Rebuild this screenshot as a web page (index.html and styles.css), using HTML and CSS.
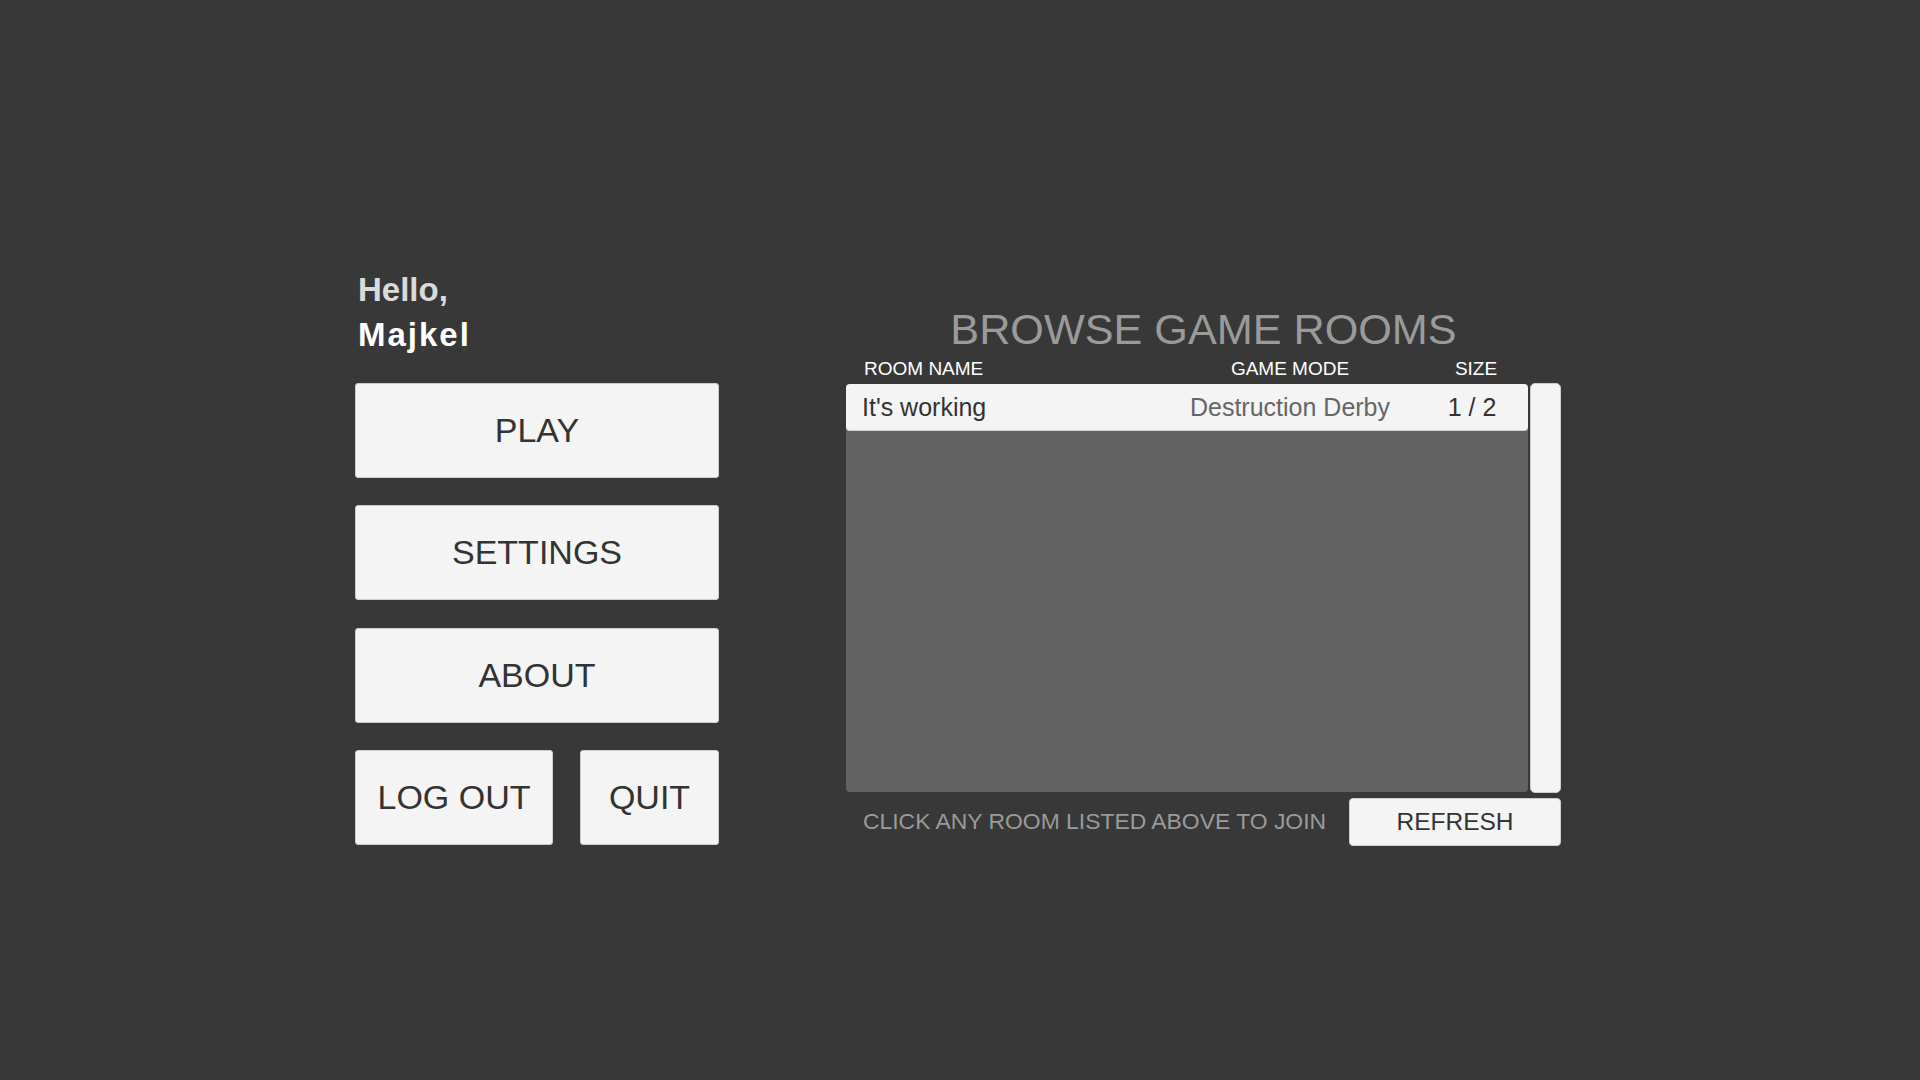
FILE: index.html
```html
<!DOCTYPE html>
<html lang="en">
<head>
<meta charset="utf-8">
<title>Browse Game Rooms</title>
<link rel="stylesheet" href="styles.css">
</head>
<body>
<div class="screen">
  <div class="menu">
    <div class="greeting">
      <div class="hello">Hello,</div>
      <div class="name">Majkel</div>
    </div>
    <div class="buttons">
      <button class="btn">PLAY</button>
      <button class="btn">SETTINGS</button>
      <button class="btn">ABOUT</button>
      <div class="btn-row">
        <button class="btn btn-logout">LOG OUT</button>
        <button class="btn btn-quit">QUIT</button>
      </div>
    </div>
  </div>
  <div class="browser">
    <h1 class="title">BROWSE GAME ROOMS</h1>
    <div class="cols header">
      <div class="col-name">ROOM NAME</div>
      <div class="col-mode">GAME MODE</div>
      <div class="col-size">SIZE</div>
    </div>
    <div class="list-area">
      <div class="list">
        <div class="cols room">
          <div class="col-name">It's working</div>
          <div class="col-mode mode">Destruction Derby</div>
          <div class="col-size">1 / 2</div>
        </div>
      </div>
      <div class="scrollbar"></div>
    </div>
    <div class="footer">
      <div class="hint">CLICK ANY ROOM LISTED ABOVE TO JOIN</div>
      <button class="btn btn-refresh">REFRESH</button>
    </div>
  </div>
</div>
</body>
</html>
```
FILE: styles.css
```css
html, body {
  margin: 0;
  padding: 0;
  background: #383838;
  font-family: "Liberation Sans", Arial, sans-serif;
}
.screen {
  width: 1920px;
  height: 1080px;
  box-sizing: border-box;
  padding: 268px 0 0 355px;
  display: flex;
  align-items: flex-start;
  gap: 127px;
}
.menu {
  width: 364px;
  display: flex;
  flex-direction: column;
}
.greeting {
  font-weight: bold;
  font-size: 33px;
  line-height: 44.5px;
  padding-left: 3px;
}
.hello { color: #dadada; }
.name { color: #ffffff; letter-spacing: 2px; }
.buttons {
  margin-top: 26px;
  display: flex;
  flex-direction: column;
  gap: 27.3px;
}
.btn {
  display: flex;
  align-items: center;
  justify-content: center;
  height: 95px;
  width: 100%;
  box-sizing: border-box;
  background: #f4f4f4;
  border: 1px solid #cdcdcd;
  border-radius: 3px;
  color: #333333;
  font-family: "Liberation Sans", Arial, sans-serif;
  font-size: 34px;
  padding: 0;
  margin: 0;
}
.btn-row {
  display: flex;
  gap: 27px;
}
.btn-logout { width: 198px; }
.btn-quit { width: 139px; }
.browser {
  width: 715px;
  display: flex;
  flex-direction: column;
}
.title {
  margin: 36.6px 0 0 0;
  font-weight: normal;
  font-size: 43.2px;
  line-height: 48px;
  color: #9a9a9a;
  text-align: center;
}
.cols {
  display: grid;
  grid-template-columns: 334px 220px 128px;
  align-items: center;
}
.col-mode { text-align: center; }
.col-size { text-align: center; padding-left: 20px; }
.header {
  margin-top: 5.8px;
  font-size: 19px;
  line-height: 22px;
  color: #ffffff;
}
.header .col-name { padding-left: 18px; }
.header .col-size { padding-left: 24px; }
.list-area {
  margin-top: 2.6px;
  display: flex;
  gap: 2px;
  height: 410px;
}
.list {
  margin-top: 1px;
  width: 682px;
  height: 408px;
  background: #626262;
  border-radius: 4px;
}
.room {
  height: 47.4px;
  background: #f4f4f4;
  border-radius: 4px;
  border-bottom: 1px solid #d0d0d0;
  box-sizing: border-box;
  font-size: 25px;
  line-height: 46px;
  color: #333333;
}
.room .col-name { padding-left: 16px; }
.room .mode { color: #666666; }
.room .col-size { padding-left: 16px; }
.scrollbar {
  width: 31px;
  height: 410px;
  background: #f4f4f4;
  border: 1px solid #cdcdcd;
  box-sizing: border-box;
  border-radius: 5px;
}
.footer {
  margin-top: 4.7px;
  display: flex;
  align-items: center;
  justify-content: space-between;
}
.hint {
  padding-left: 17px;
  font-size: 22.9px;
  color: #9a9a9a;
}
.btn-refresh {
  width: 212px;
  height: 48px;
  font-size: 24.5px;
  border-radius: 4px;
}
```
